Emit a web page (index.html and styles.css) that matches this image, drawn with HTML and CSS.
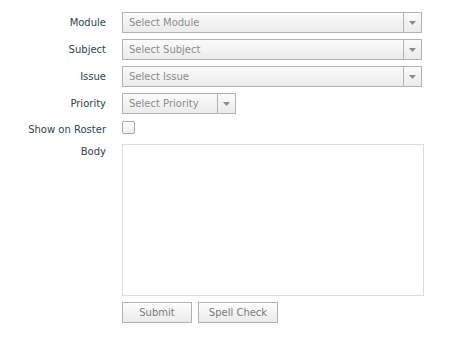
FILE: index.html
```html
<!DOCTYPE html>
<html lang="en">
<head>
    <meta charset="UTF-8" />
    <title>New Message</title>
    <link rel="stylesheet" href="styles.css">
</head>
<body>

<form class="msg-form">
    <label class="lbl">Module</label>
    <div class="combo wide">
        <span class="combo-text">Select Module</span>
        <span class="combo-arrow"><svg width="7" height="4" viewBox="0 0 7 4"><path d="M0 0H7L3.5 4Z" fill="#8a8a8a"/></svg></span>
    </div>

    <label class="lbl">Subject</label>
    <div class="combo wide">
        <span class="combo-text">Select Subject</span>
        <span class="combo-arrow"><svg width="7" height="4" viewBox="0 0 7 4"><path d="M0 0H7L3.5 4Z" fill="#8a8a8a"/></svg></span>
    </div>

    <label class="lbl">Issue</label>
    <div class="combo wide">
        <span class="combo-text">Select Issue</span>
        <span class="combo-arrow"><svg width="7" height="4" viewBox="0 0 7 4"><path d="M0 0H7L3.5 4Z" fill="#8a8a8a"/></svg></span>
    </div>

    <label class="lbl">Priority</label>
    <div class="combo short">
        <span class="combo-text">Select Priority</span>
        <span class="combo-arrow"><svg width="7" height="4" viewBox="0 0 7 4"><path d="M0 0H7L3.5 4Z" fill="#8a8a8a"/></svg></span>
    </div>

    <label class="lbl roster">Show on Roster</label>
    <div class="check-cell"><span class="check"></span></div>

    <label class="lbl top">Body</label>
    <textarea class="body-box"></textarea>

    <span></span>
    <div class="buttons">
        <button type="button" class="btn submit">Submit</button>
        <button type="button" class="btn spell">Spell Check</button>
    </div>
</form>

</body>
</html>
```

FILE: styles.css
```css
body {
    margin: 0;
    background: #fff;
    font-family: 'DejaVu Sans', Verdana, sans-serif;
    font-size: 10px;
}

.msg-form {
    display: grid;
    grid-template-columns: 106px auto;
    grid-template-rows: 21px 21px 21px 21px 15px 155px 21px;
    column-gap: 16px;
    row-gap: 6px;
    padding-top: 12px;
    justify-items: start;
}

.lbl {
    justify-self: end;
    align-self: center;
    color: #2b474c;
}

.lbl.roster {
    padding-top: 3px;
}

.lbl.top {
    align-self: start;
    padding-top: 5px;
}

.combo {
    display: flex;
    height: 21px;
    box-sizing: border-box;
    border: 1px solid #b3b3b3;
    background: linear-gradient(#fbfbfb, #ebebeb);
}

.combo.wide { width: 300px; }
.combo.short { width: 114px; }

.combo-text {
    flex: 1;
    padding-left: 6px;
    line-height: 19px;
    color: #8c8c8c;
}

.combo-arrow {
    width: 17px;
    border-left: 1px solid #b3b3b3;
    display: flex;
    align-items: center;
    justify-content: center;
}

.check-cell {
    padding-top: 1px;
}

.check {
    display: block;
    width: 13px;
    height: 13px;
    box-sizing: border-box;
    border: 1px solid #a8a8a8;
    border-radius: 2px;
    background: linear-gradient(#fff, #ececec);
}

.body-box {
    width: 302px;
    height: 152px;
    margin-top: 3px;
    box-sizing: border-box;
    border: 1px solid #dcdcdc;
    resize: none;
    padding: 0;
}

.buttons {
    display: flex;
    gap: 6px;
}

.btn {
    height: 21px;
    box-sizing: border-box;
    border: 1px solid #b3b3b3;
    background: linear-gradient(#fdfdfd, #ebebeb);
    color: #7a7a7a;
    font-family: inherit;
    font-size: 10px;
    padding: 0;
}

.btn.submit { width: 70px; }
.btn.spell { width: 80px; }
```
